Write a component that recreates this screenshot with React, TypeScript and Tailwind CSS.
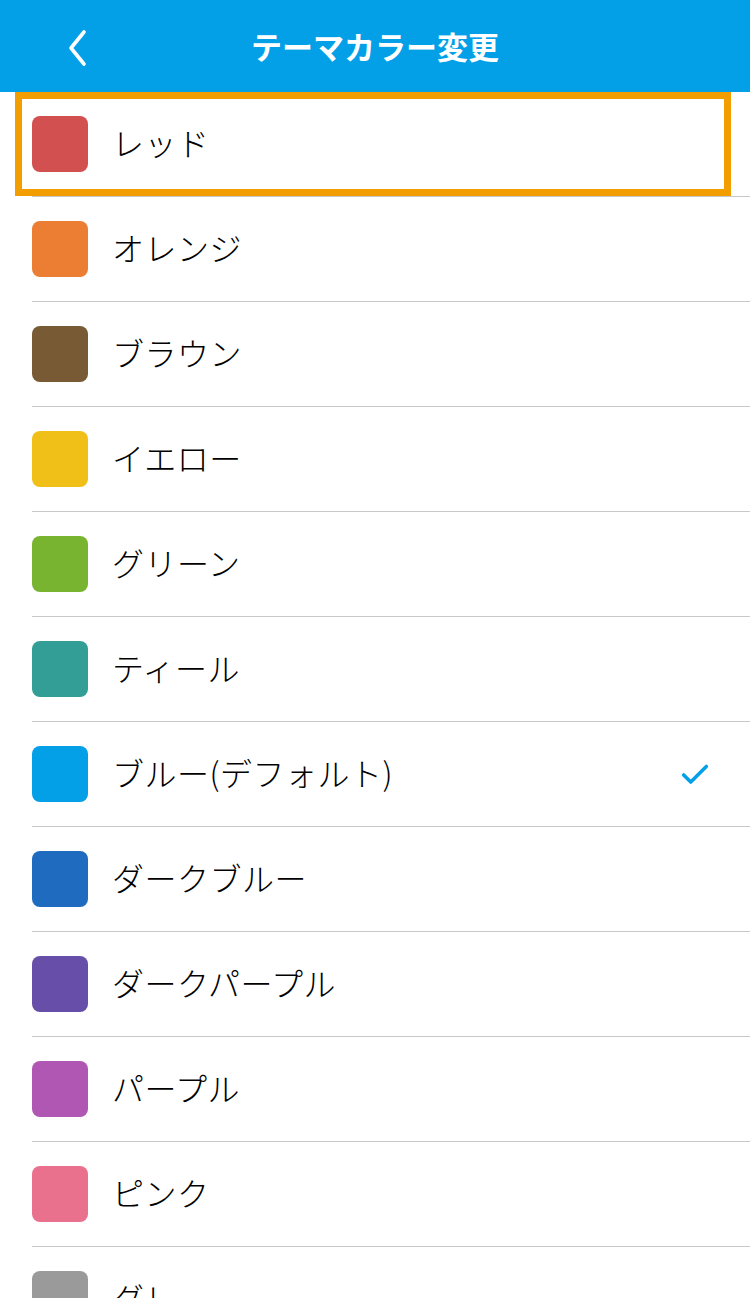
import { Check } from 'lucide-react';

const colors = [
  { name: 'レッド', hex: '#d35050' },
  { name: 'オレンジ', hex: '#ec7e33' },
  { name: 'ブラウン', hex: '#785a35' },
  { name: 'イエロー', hex: '#f0c018' },
  { name: 'グリーン', hex: '#78b430' },
  { name: 'ティール', hex: '#339e96' },
  { name: 'ブルー(デフォルト)', hex: '#03a0e8', selected: true },
  { name: 'ダークブルー', hex: '#1e6bc0' },
  { name: 'ダークパープル', hex: '#674fa9' },
  { name: 'パープル', hex: '#b057b3' },
  { name: 'ピンク', hex: '#ea718e' },
  { name: 'グレー', hex: '#9a9a9a' },
];

export default function App() {
  return (
    <div
      className="w-[750px] h-[1298px] overflow-hidden bg-white"
      style={{ fontFamily: '"Noto Sans CJK JP", "Noto Sans", sans-serif' }}
    >
      <header className="relative h-[92px] bg-[#03a0e8] flex items-center justify-center">
        <button className="absolute left-[60px] top-[28px] w-[34px] h-[40px] flex items-center justify-center">
          <svg width="26" height="38" viewBox="0 0 26 38" fill="none">
            <path d="M20 3 L7 19 L20 35" stroke="white" strokeWidth="3.6" strokeLinecap="round" strokeLinejoin="round" />
          </svg>
        </button>
        <h1 className="text-white text-[31px] font-bold">テーマカラー変更</h1>
      </header>
      <ul>
        {colors.map((c, i) => (
          <li key={c.name} className="relative">
            <div className="ml-[32px] h-[105px] border-b border-[#c8c8c8] flex items-center">
              <div className="w-[56px] h-[56px] rounded-[8px]" style={{ backgroundColor: c.hex }} />
              <span className="ml-[24px] mb-[5px] text-[32px] text-black font-light leading-none tracking-[0.5px]">
                {c.name}
              </span>
              {c.selected && (
                <Check className="ml-auto mr-[38px] mt-[2px] text-[#03a0e8]" size={34} strokeWidth={2.5} />
              )}
            </div>
            {i === 0 && (
              <div className="absolute left-[15px] top-0 w-[716px] h-[104px] border-[7px] border-[#f29e00] pointer-events-none" />
            )}
          </li>
        ))}
      </ul>
    </div>
  );
}
